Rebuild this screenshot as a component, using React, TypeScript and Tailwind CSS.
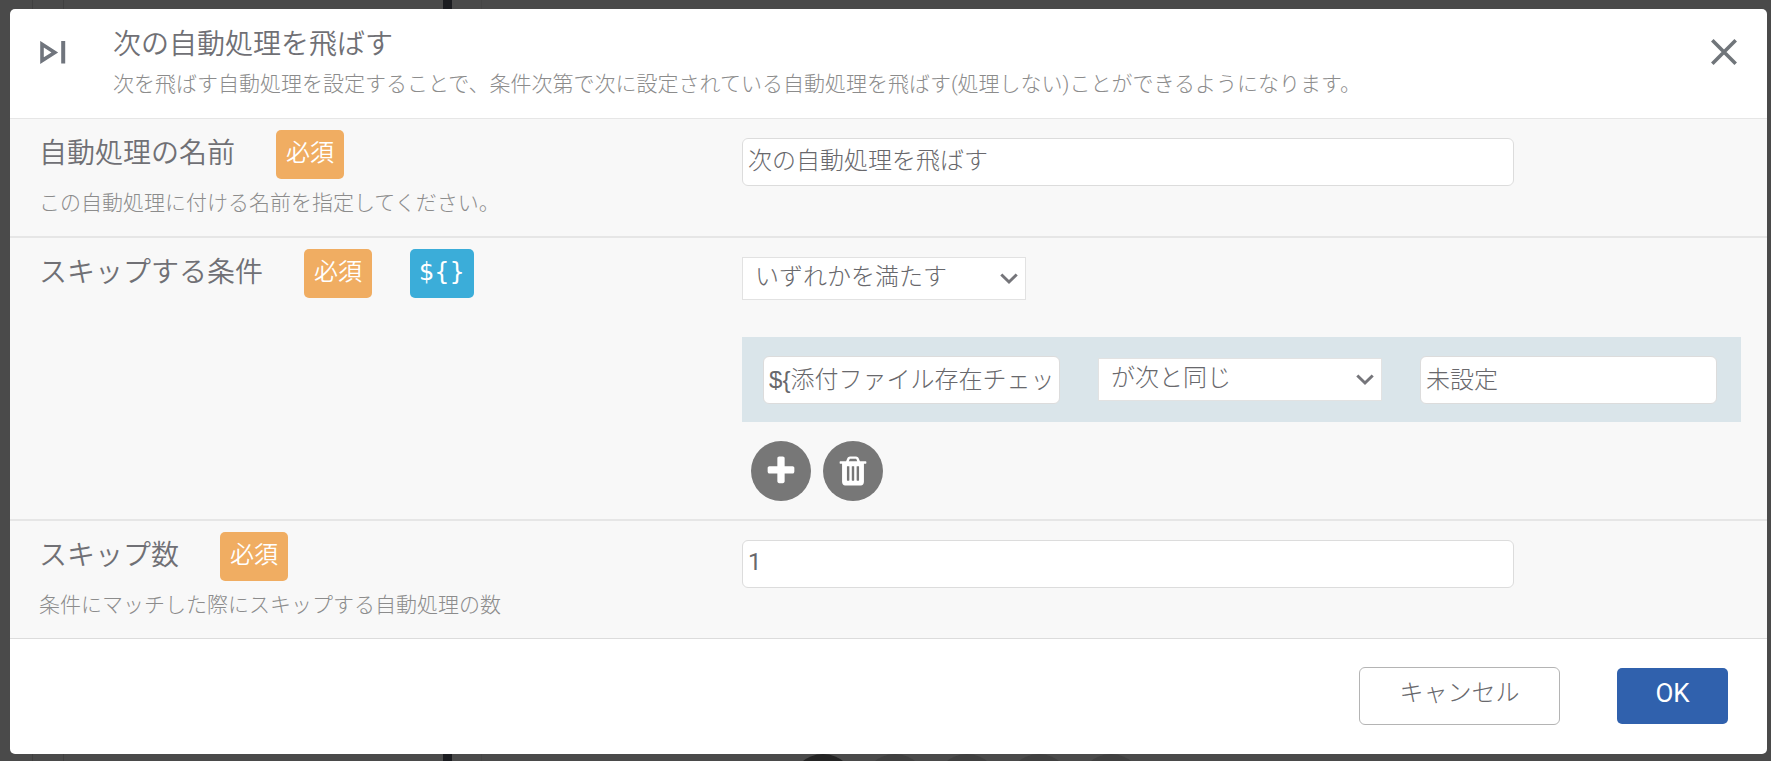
import type { ReactNode } from 'react';

const FONT = "font-['Roboto','Noto_Sans_CJK_JP',sans-serif]";

function Badge({ kind = 'required' }: { kind?: 'required' | 'variable' }) {
  if (kind === 'variable') {
    return (
      <span className="flex h-[49px] items-center rounded-[5px] bg-[#3badd9] px-[9px] pb-1 font-['DejaVu_Sans',sans-serif] text-[24px] font-normal text-white">
        {'${}'}
      </span>
    );
  }
  return (
    <span className="flex h-[49px] items-center rounded-[5px] bg-[#f0ad62] px-[10px] pb-1 text-[24px] font-[350] text-white">
      必須
    </span>
  );
}

function Chevron() {
  return (
    <svg viewBox="0 0 18 12" className="pointer-events-none absolute top-4 right-2 h-3 w-[18px]" fill="none" stroke="#75757a" strokeWidth="3" aria-hidden="true">
      <path d="M1.3 1.5 9 9l7.7-7.5" />
    </svg>
  );
}

function SelectBox({ id, label, options }: { id: string; label: string; options: string[] }) {
  return (
    <div className="relative h-[43px] w-[284px] shrink-0">
      <select id={id} aria-label={label} className="h-full w-full appearance-none border border-[#e2e2e2] bg-white pr-8 pb-1 pl-3 text-[24px] text-[#68686c] outline-none">
        {options.map((o) => (
          <option key={o}>{o}</option>
        ))}
      </select>
      <Chevron />
    </div>
  );
}

const INPUT =
  'h-12 min-w-0 rounded-[6px] border border-[#dcdcdc] bg-white px-[5px] text-[24px] text-[#68686c] outline-none';
const CONDITION_FONT = "font-['Liberation_Sans','Noto_Sans_CJK_JP',sans-serif]";

type RowProps = {
  htmlFor: string;
  label: string;
  help?: string;
  variable?: boolean;
  last?: boolean;
  children: ReactNode;
};

function Row({ htmlFor, label, help, variable, last, children }: RowProps) {
  return (
    <section className={`grid grid-cols-12 bg-[#f8f8f8] ${last ? 'border-b border-[#dcdcdc]' : 'border-b-2 border-[#e6e6e6]'}`}>
      <div className="col-span-5 pt-[11px] pl-[29px]">
        <div className="flex h-[49px] items-center gap-[38px]">
          <label htmlFor={htmlFor} className="pr-[3px] pb-0.5 text-[28px] leading-10 font-[350] text-[#707075]">{label}</label>
          <Badge />
          {variable && <Badge kind="variable" />}
        </div>
        {help && <p className="pt-2 pb-[17px] text-[21px] leading-8 text-[#8c8c8c]">{help}</p>}
      </div>
      <div className="col-span-7 pt-[19px] pr-[26px]">{children}</div>
    </section>
  );
}

const ROUND = 'flex size-[60px] items-center justify-center rounded-full bg-[#777777] text-white';

export default function App() {
  return (
    <div className={`relative min-h-screen overflow-hidden bg-[#4a4a4a] pt-[9px] pr-1 pb-[7px] pl-[10px] font-light ${FONT}`}>
      <div aria-hidden="true">
        <div className="absolute inset-y-0 left-8 w-px bg-[#404040]" />
        <div className="absolute inset-y-0 left-[63px] w-px bg-[#404040]" />
        <div className="absolute inset-y-0 left-[443px] w-[9px] bg-[#1b1c20]" />
        <div className="absolute inset-y-0 left-[481px] w-px bg-[#454545]" />
        <div className="absolute top-[754px] left-[791px] flex gap-2">
          <div className="size-16 rounded-full bg-[#242424]" />
          <div className="size-16 rounded-full bg-[#404040]" />
          <div className="size-16 rounded-full bg-[#404040]" />
          <div className="size-16 rounded-full bg-[#404040]" />
          <div className="size-16 rounded-full bg-[#404040]" />
        </div>
      </div>

      <main role="dialog" aria-labelledby="dialog-title" className="relative overflow-hidden rounded-[5px] bg-white">
        <header className="flex items-start border-b border-[#e6e6e6] pt-4 pr-[30px] pb-[18px] pl-[30px]">
          <svg viewBox="0 0 26 23" className="mt-4 h-[23px] w-[26px] shrink-0" aria-hidden="true">
            <path d="M2 3.2v16.4l12.8-8.2z" fill="none" stroke="#70757d" strokeWidth="3.6" />
            <path d="M21.2 0h4v22.5h-4z" fill="#70757d" />
          </svg>
          <div className="ml-[47px] flex-1">
            <h1 id="dialog-title" className="text-[28px] leading-10 font-[350] text-[#707075]">次の自動処理を飛ばす</h1>
            <p className="pt-[3px] text-[21px] leading-8 text-[#8c8c8c]">
              次を飛ばす自動処理を設定することで、条件次第で次に設定されている自動処理を飛ばす(処理しない)ことができるようになります。
            </p>
          </div>
          <button type="button" aria-label="閉じる" className="mt-3.5 shrink-0">
            <svg viewBox="0 0 26 26" className="size-[26px]" fill="none" stroke="#70757a" strokeWidth="3.6" aria-hidden="true">
              <path d="M1.3 1.3l23.4 23.4M24.7 1.3 1.3 24.7" />
            </svg>
          </button>
        </header>

        <Row htmlFor="name" label="自動処理の名前" help="この自動処理に付ける名前を指定してください。">
          <input id="name" type="text" defaultValue="次の自動処理を飛ばす" className={`${INPUT} w-full max-w-[772px] pb-2`} />
        </Row>

        <Row htmlFor="match" label="スキップする条件" variable>
          <SelectBox id="match" label="スキップする条件" options={['いずれかを満たす', 'すべてを満たす']} />
          <div className="mt-[37px] flex h-[85px] items-center gap-[38px] bg-[#dae5ea] pr-6 pl-[21px]">
            <input type="text" aria-label="比較元" defaultValue="${添付ファイル存在チェック}" className={`${INPUT} ${CONDITION_FONT} flex-1 pb-1`} />
            <SelectBox id="operator" label="比較方法" options={['が次と同じ', 'が次と異なる']} />
            <input type="text" aria-label="比較先" defaultValue="未設定" className={`${INPUT} ${CONDITION_FONT} flex-1 pb-1`} />
          </div>
          <div className="flex gap-3 pt-[19px] pb-[18px] pl-[9px]">
            <button type="button" aria-label="追加" className={ROUND}>
              <svg viewBox="0 0 1792 1792" className="size-[34px]" fill="currentColor" aria-hidden="true">
                <path d="M1600 736v192q0 40-28 68t-68 28h-416v416q0 40-28 68t-68 28h-192q-40 0-68-28t-28-68v-416h-416q-40 0-68-28t-28-68v-192q0-40 28-68t68-28h416v-416q0-40 28-68t68-28h192q40 0 68 28t28 68v416h416q40 0 68 28t28 68z" />
              </svg>
            </button>
            <button type="button" aria-label="削除" className={ROUND}>
              <svg viewBox="0 0 1792 1792" className="size-[34px]" fill="currentColor" aria-hidden="true">
                <path d="M704 1376v-704q0-14-9-23t-23-9h-64q-14 0-23 9t-9 23v704q0 14 9 23t23 9h64q14 0 23-9t9-23zm256 0v-704q0-14-9-23t-23-9h-64q-14 0-23 9t-9 23v704q0 14 9 23t23 9h64q14 0 23-9t9-23zm256 0v-704q0-14-9-23t-23-9h-64q-14 0-23 9t-9 23v704q0 14 9 23t23 9h64q14 0 23-9t9-23zm-544-992h448l-48-117q-7-9-17-11h-317q-10 2-17 11zm928 32v64q0 14-9 23t-23 9h-96v948q0 83-47 143.5t-113 60.5h-832q-66 0-113-58.5t-47-141.5v-952h-96q-14 0-23-9t-9-23v-64q0-14 9-23t23-9h309l70-167q15-37 54-63t79-26h320q40 0 79 26t54 63l70 167h309q14 0 23 9t9 23z" />
              </svg>
            </button>
          </div>
        </Row>

        <Row htmlFor="count" label="スキップ数" help="条件にマッチした際にスキップする自動処理の数" last>
          <input id="count" type="text" defaultValue="1" className={`${INPUT} w-full max-w-[772px] pb-1 font-normal`} />
        </Row>

        <footer className="flex items-center justify-end gap-[57px] pt-7 pr-[39px] pb-[29px]">
          <button type="button" className="h-[58px] w-[201px] rounded-[6px] border border-[#b4b4b4] bg-white pb-1.5 text-[24px] text-[#68686c]">
            キャンセル
          </button>
          <button type="button" className="h-14 w-[111px] rounded-[5px] bg-[#3061ad] pb-1.5 text-[26px] font-normal text-white">
            OK
          </button>
        </footer>
      </main>
    </div>
  );
}
